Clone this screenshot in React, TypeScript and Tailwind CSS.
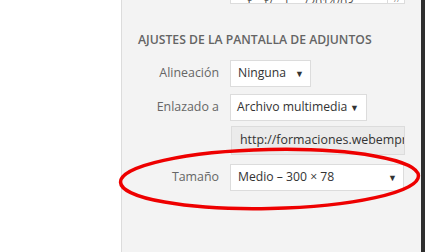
export default function App() {
  const font = { fontFamily: '"Open Sans", "Noto Sans", sans-serif' };
  return (
    <div className="relative flex h-[252px] w-[425px] overflow-hidden bg-white" style={font}>
      <div className="w-[121px] shrink-0 bg-white" />
      <div className="relative flex w-[300px] shrink-0 flex-col border-l border-[#dcdcdc] bg-[#f3f3f3]">
        {/* clipped textarea at top */}
        <div className="ml-[108px] flex h-[4px] w-[175px] overflow-hidden border-x border-b border-[#dcdcdc] bg-white">
          <div className="relative w-[157px] border-r border-[#dcdcdc]">
            <span className="absolute bottom-[-9px] left-[4px] whitespace-nowrap text-[12px] text-[#555]">
              &nbsp;&nbsp;&nbsp;&nbsp;t&nbsp;&nbsp;&nbsp;&nbsp;t/&nbsp;&nbsp;&nbsp;&nbsp;l&nbsp;&nbsp;&nbsp;&nbsp;&nbsp;/2014/03
            </span>
          </div>
          <div className="relative flex-1">
            <span className="absolute bottom-[-2px] left-[6px] text-[8px] text-[#777]">//</span>
          </div>
        </div>

        <h3 className="ml-[16px] mt-[28px] text-[12.2px] font-semibold uppercase leading-[16px] text-[#646464]">
          Ajustes de la pantalla de adjuntos
        </h3>

        <div className="mt-[12px] flex items-center">
          <span className="w-[97px] text-right text-[12.4px] text-[#666]">Alineación</span>
          <div className="ml-[11px] flex h-[27px] w-[81px] items-center justify-between border border-[#dcdcdc] bg-white pl-[7px] pr-[6px] text-[12.2px] text-[#333]">
            <span>Ninguna</span>
            <span className="text-[9px]">▼</span>
          </div>
        </div>

        <div className="mt-[7px] flex items-center">
          <span className="w-[97px] text-right text-[12.4px] text-[#666]">Enlazado a</span>
          <div className="ml-[11px] flex h-[27px] w-[137px] items-center justify-between border border-[#dcdcdc] bg-white pl-[6px] pr-[7px] text-[12.2px] text-[#333]">
            <span className="whitespace-nowrap">Archivo multimedia</span>
            <span className="text-[9px]">▼</span>
          </div>
        </div>

        <div className="ml-[109px] mt-[5px] flex h-[29px] w-[174px] items-center overflow-hidden border border-[#dcdcdc] bg-[#ebebeb] pl-[8px] text-[12.4px] text-[#333]">
          <span className="whitespace-nowrap">http://formaciones.webempresa</span>
        </div>

        <div className="mt-[9px] flex items-center">
          <span className="w-[97px] text-right text-[12.4px] text-[#666]">Tamaño</span>
          <div className="ml-[11px] flex h-[27px] w-[174px] items-center justify-between border border-[#dcdcdc] bg-white pl-[7px] pr-[6px] text-[12.2px] text-[#333]">
            <span className="whitespace-nowrap">Medio – 300 × 78</span>
            <span className="text-[9px]">▼</span>
          </div>
        </div>
      </div>
      <div className="flex-1 bg-[#2e2e2e]" />

      {/* red annotation ellipse */}
      <svg className="pointer-events-none absolute left-0 top-0" width="425" height="252">
        <ellipse
          cx="269.5"
          cy="179"
          rx="149"
          ry="29.5"
          fill="none"
          stroke="#ee0000"
          strokeWidth="3.5"
          transform="rotate(-1.2 269.5 179)"
        />
      </svg>
    </div>
  );
}
